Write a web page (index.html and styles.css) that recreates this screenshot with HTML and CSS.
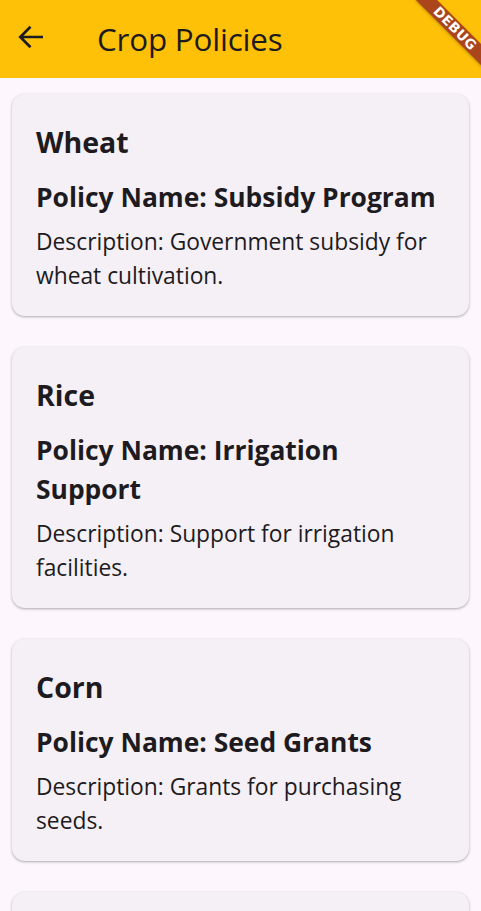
FILE: index.html
```html
<!DOCTYPE html>
<html>
<head>
<meta charset="utf-8">
<link rel="stylesheet" href="styles.css">
</head>
<body>
<header class="appbar">
  <svg class="back" viewBox="0 0 26 24" width="26" height="24"><path d="M25 12H3.5M12.5 1.8L2.3 12l10.2 10.2" fill="none" stroke="#1d1b20" stroke-width="2.7"/></svg>
  <h1 class="title">Crop Policies</h1>
</header>
<div class="banner"><span>DEBUG</span></div>
<main class="list">
  <section class="card">
    <h2 class="crop">Wheat</h2>
    <h3 class="policy">Policy Name: Subsidy Program</h3>
    <p class="desc">Description: Government subsidy for wheat cultivation.</p>
  </section>
  <section class="card">
    <h2 class="crop">Rice</h2>
    <h3 class="policy">Policy Name: Irrigation Support</h3>
    <p class="desc">Description: Support for irrigation facilities.</p>
  </section>
  <section class="card">
    <h2 class="crop">Corn</h2>
    <h3 class="policy">Policy Name: Seed Grants</h3>
    <p class="desc">Description: Grants for purchasing seeds.</p>
  </section>
  <section class="card">
    <h2 class="crop">Soybean</h2>
    <h3 class="policy">Policy Name: Crop Insurance</h3>
    <p class="desc">Description: Insurance against crop failure.</p>
  </section>
</main>
</body>
</html>
```
FILE: styles.css
```css
html, body {
  margin: 0;
  padding: 0;
  height: 911px;
  overflow: hidden;
}
body {
  background: #fdf7fd;
  font-family: "Open Sans", "Noto Sans", sans-serif;
  color: #1d1b20;
  position: relative;
}
.appbar {
  height: 78px;
  background: #ffc107;
  display: flex;
  align-items: center;
  padding-left: 18px;
  box-sizing: border-box;
}
.back {
  flex: none;
  margin-bottom: 5px;
}
.title {
  margin: 0 0 0 53px;
  font-size: 31.4px;
  font-weight: 400;
  line-height: 36px;
  letter-spacing: -0.2px;
}
.banner {
  position: absolute;
  left: 407px;
  top: 21px;
  width: 96px;
  height: 15px;
  background: #ab451c;
  transform: rotate(45deg);
  display: flex;
  align-items: center;
  justify-content: center;
  box-shadow: 0 1px 3px rgba(0,0,0,0.25);
}
.banner span {
  color: #fff;
  font-family: "DejaVu Sans", sans-serif;
  font-weight: 900;
  font-size: 13.5px;
  letter-spacing: 0.4px;
  line-height: 15px;
}
.list {
  padding: 16px 12px;
  display: flex;
  flex-direction: column;
  gap: 31px;
}
.card {
  background: #f5f0f6;
  border-radius: 13px;
  padding: 30px 24px 23px;
  box-shadow: 0 1px 2px rgba(0,0,0,0.22), 0 1px 3px 1px rgba(0,0,0,0.08);
}
.crop {
  margin: 0;
  font-size: 28.5px;
  font-weight: 700;
  line-height: 36px;
}
.policy {
  margin: 18px 0 0;
  max-width: 404px;
  font-size: 26.4px;
  font-weight: 700;
  line-height: 39px;
}
.desc {
  margin: 8px 0 0;
  font-size: 22.8px;
  font-weight: 400;
  line-height: 34px;
}
```
